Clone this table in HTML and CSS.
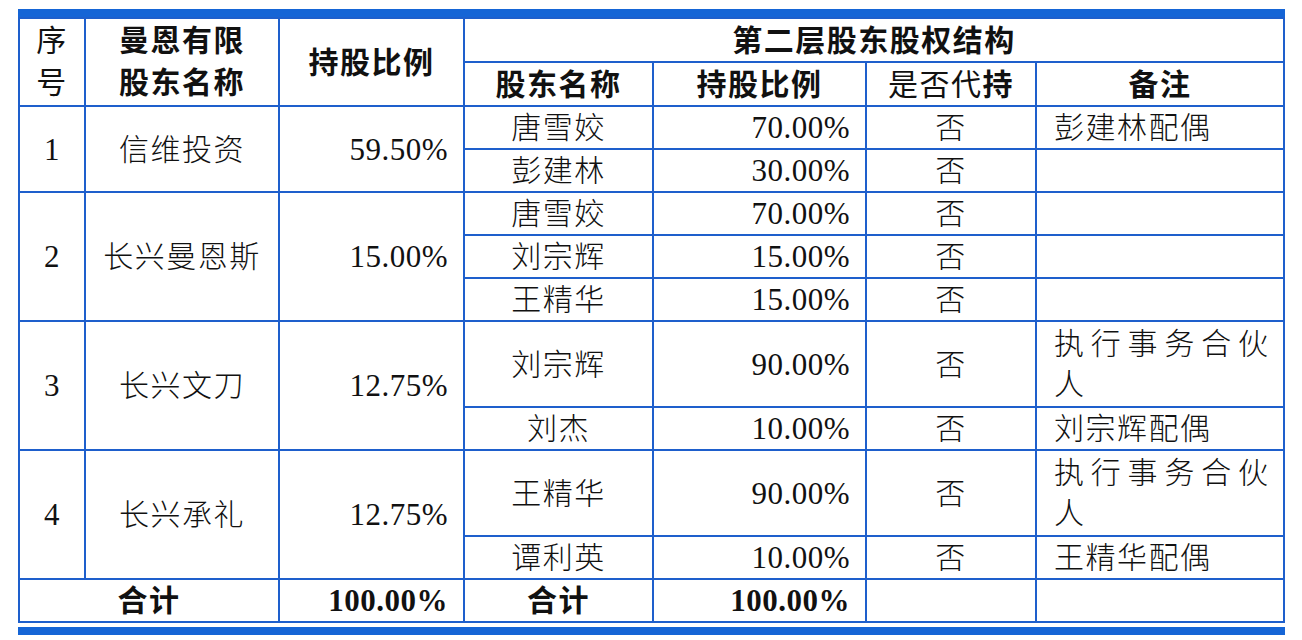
FILE: index.html
```html
<!DOCTYPE html>
<html lang="zh-CN">
<head>
<meta charset="utf-8">
<title>股权结构</title>
<link rel="stylesheet" href="styles.css">
</head>
<body>
<div class="sheet">
  <div class="band band-top"></div>
  <table class="equity">
    <colgroup>
      <col class="c1"><col class="c2"><col class="c3"><col class="c4"><col class="c5"><col class="c6"><col class="c7">
    </colgroup>
    <thead>
      <tr class="rh">
        <th rowspan="2" class="seq tall">序<br>号</th>
        <th rowspan="2" class="bold tall">曼恩有限<br>股东名称</th>
        <th rowspan="2" class="bold">持股比例</th>
        <th colspan="4" class="bold">第二层股东股权结构</th>
      </tr>
      <tr class="rh">
        <th class="bold">股东名称</th>
        <th class="bold">持股比例</th>
        <th class="mixed">是否代<span class="bold">持</span></th>
        <th class="bold">备注</th>
      </tr>
    </thead>
    <tbody>
      <tr class="r1">
        <td rowspan="2" class="ctr num">1</td>
        <td rowspan="2" class="ctr">信维投资</td>
        <td rowspan="2" class="rt num">59.50%</td>
        <td class="ctr">唐雪姣</td>
        <td class="rt num">70.00%</td>
        <td class="ctr">否</td>
        <td class="lt">彭建林配偶</td>
      </tr>
      <tr class="r1">
        <td class="ctr">彭建林</td>
        <td class="rt num">30.00%</td>
        <td class="ctr">否</td>
        <td class="lt"></td>
      </tr>
      <tr class="r1">
        <td rowspan="3" class="ctr num">2</td>
        <td rowspan="3" class="ctr">长兴曼恩斯</td>
        <td rowspan="3" class="rt num">15.00%</td>
        <td class="ctr">唐雪姣</td>
        <td class="rt num">70.00%</td>
        <td class="ctr">否</td>
        <td class="lt"></td>
      </tr>
      <tr class="r1">
        <td class="ctr">刘宗辉</td>
        <td class="rt num">15.00%</td>
        <td class="ctr">否</td>
        <td class="lt"></td>
      </tr>
      <tr class="r1">
        <td class="ctr">王精华</td>
        <td class="rt num">15.00%</td>
        <td class="ctr">否</td>
        <td class="lt"></td>
      </tr>
      <tr class="r2">
        <td rowspan="2" class="ctr num">3</td>
        <td rowspan="2" class="ctr">长兴文刀</td>
        <td rowspan="2" class="rt num">12.75%</td>
        <td class="ctr">刘宗辉</td>
        <td class="rt num">90.00%</td>
        <td class="ctr">否</td>
        <td class="lt"><span class="spread">执行事务合伙</span><br>人</td>
      </tr>
      <tr class="r1">
        <td class="ctr">刘杰</td>
        <td class="rt num">10.00%</td>
        <td class="ctr">否</td>
        <td class="lt">刘宗辉配偶</td>
      </tr>
      <tr class="r2">
        <td rowspan="2" class="ctr num">4</td>
        <td rowspan="2" class="ctr">长兴承礼</td>
        <td rowspan="2" class="rt num">12.75%</td>
        <td class="ctr">王精华</td>
        <td class="rt num">90.00%</td>
        <td class="ctr">否</td>
        <td class="lt"><span class="spread">执行事务合伙</span><br>人</td>
      </tr>
      <tr class="r1">
        <td class="ctr">谭利英</td>
        <td class="rt num">10.00%</td>
        <td class="ctr">否</td>
        <td class="lt">王精华配偶</td>
      </tr>
      <tr class="r1">
        <td colspan="2" class="ctr bold">合计</td>
        <td class="rt num bold">100.00%</td>
        <td class="ctr bold">合计</td>
        <td class="rt num bold">100.00%</td>
        <td></td>
        <td></td>
      </tr>
    </tbody>
  </table>
  <div class="band band-bottom"></div>
</div>
</body>
</html>
```

FILE: styles.css
```css
html, body {
  margin: 0;
  padding: 0;
  background: #ffffff;
}

.sheet {
  padding: 9px 0 0 18px;
  width: 1268px;
}

.band {
  background: #1565d6;
  height: 8px;
  width: 1267px;
}

.band-bottom {
  margin-top: 4px;
}

.equity {
  border-collapse: collapse;
  table-layout: fixed;
  width: 1266px;
  font-family: "Liberation Serif", "Noto Sans CJK SC", serif;
  font-size: 30px;
  font-weight: 300;
  color: #111111;
  letter-spacing: 1.5px;
}

.c1 { width: 66px; }
.c2 { width: 194px; }
.c3 { width: 185px; }
.c4 { width: 189px; }
.c5 { width: 213px; }
.c6 { width: 170px; }
.c7 { width: 248px; }

.equity th,
.equity td {
  border: 2px solid #1e5fcc;
  padding: 0;
  line-height: 41px;
  vertical-align: middle;
  font-weight: 300;
}

.equity th {
  text-align: center;
}

.equity th.tall {
  line-height: 42px;
}

.equity tr.rh { height: 44px; }
.equity tr.r1 { height: 43px; }
.equity tr.r2 { height: 86px; }

.equity .seq {
  font-weight: 400;
}

.equity .bold,
.equity .mixed .bold {
  font-weight: 700;
}

.equity .mixed {
  font-weight: 400;
}

.ctr { text-align: center; }

.rt {
  text-align: right;
  padding-right: 15px !important;
}

.lt {
  text-align: left;
  padding-left: 17px !important;
}

.num {
  letter-spacing: 0.5px;
  font-size: 31px;
}

.spread {
  letter-spacing: 6.8px;
}
```
